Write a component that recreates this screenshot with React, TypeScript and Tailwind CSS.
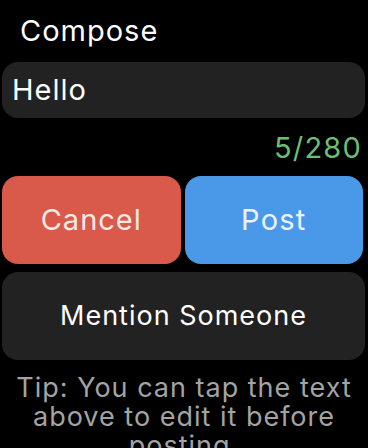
export default function App() {
  return (
    <div
      className="w-[368px] h-[448px] overflow-hidden bg-black text-white flex flex-col px-[2px]"
      style={{ fontFamily: "Inter, 'Noto Sans', sans-serif" }}
    >
      {/* Title */}
      <div className="shrink-0 h-[62px] pl-[18px] pt-[13px] text-[29px] leading-[36px] tracking-[1px]">
        Compose
      </div>

      {/* Text field */}
      <div className="shrink-0 h-[56px] w-[363px] rounded-[16px] bg-[#222222] flex items-center pl-[10px] text-[29px] tracking-[1px]">
        Hello
      </div>

      {/* Counter */}
      <div className="shrink-0 h-[58px] flex items-center justify-end pr-[4px] pt-[2px] text-[29px] text-[#6ebd71] tracking-[1.2px]">
        5/280
      </div>

      {/* Actions */}
      <div className="shrink-0 flex gap-[4px] w-[361px] h-[88px]">
        <button className="flex-1 rounded-[16px] bg-[#d9594a] text-[29px] text-[#fbe9e6] tracking-[1px]">
          Cancel
        </button>
        <button className="flex-1 rounded-[16px] bg-[#4a99e9] text-[29px] text-[#eaf3fd] tracking-[1.2px]">
          Post
        </button>
      </div>

      <button className="shrink-0 mt-[8px] w-[363px] h-[88px] rounded-[16px] bg-[#222222] text-[27px] tracking-[1px]">
        Mention Someone
      </button>

      {/* Tip */}
      <p className="shrink-0 mt-[13px] text-center text-[27px] leading-[29px] text-[#a3a3a3] tracking-[1px]">
        Tip: You can tap the text above to edit it before posting.
      </p>
    </div>
  );
}
